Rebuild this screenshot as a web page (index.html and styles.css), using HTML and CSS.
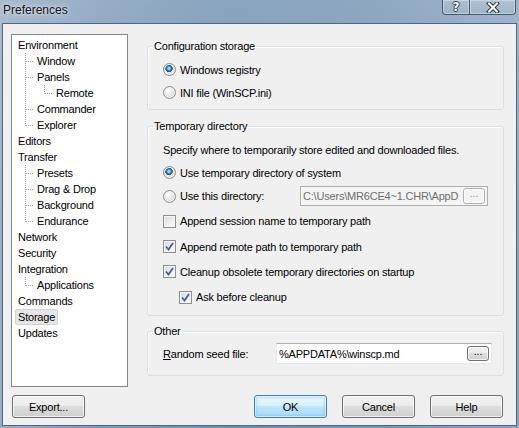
FILE: index.html
```html
<!DOCTYPE html>
<html>
<head>
    <meta charset="UTF-8">
    <title>Preferences</title>
    <link rel="stylesheet" href="styles.css">
</head>
<body>
    <div class="window">
        <div class="titlebar">
            <span class="title">Preferences</span>
            <div class="caption-buttons">
                <div class="caption help-caption"><span>?</span></div>
                <div class="caption close-caption">
                    <svg width="14" height="11" viewBox="0 0 14 11">
                        <path d="M3 1.5 L11 9.5 M11 1.5 L3 9.5" stroke="#2c3a4a" stroke-width="4" stroke-linecap="square"/>
                        <path d="M3 1.5 L11 9.5 M11 1.5 L3 9.5" stroke="#fff" stroke-width="2" stroke-linecap="square"/>
                    </svg>
                </div>
            </div>
        </div>

        <div class="client">
            <div class="main">
                <ul class="tree">
                    <li>
                        <div class="label"><span class="text">Environment</span></div>
                        <ul class="sub">
                            <li><div class="label"><span class="text">Window</span></div></li>
                            <li>
                                <div class="label"><span class="text">Panels</span></div>
                                <ul class="sub">
                                    <li class="last"><div class="label"><span class="text">Remote</span></div></li>
                                </ul>
                            </li>
                            <li><div class="label"><span class="text">Commander</span></div></li>
                            <li class="last"><div class="label"><span class="text">Explorer</span></div></li>
                        </ul>
                    </li>
                    <li><div class="label"><span class="text">Editors</span></div></li>
                    <li>
                        <div class="label"><span class="text">Transfer</span></div>
                        <ul class="sub">
                            <li><div class="label"><span class="text">Presets</span></div></li>
                            <li><div class="label"><span class="text">Drag &amp; Drop</span></div></li>
                            <li><div class="label"><span class="text">Background</span></div></li>
                            <li class="last"><div class="label"><span class="text">Endurance</span></div></li>
                        </ul>
                    </li>
                    <li><div class="label"><span class="text">Network</span></div></li>
                    <li><div class="label"><span class="text">Security</span></div></li>
                    <li>
                        <div class="label"><span class="text">Integration</span></div>
                        <ul class="sub">
                            <li class="last"><div class="label"><span class="text">Applications</span></div></li>
                        </ul>
                    </li>
                    <li><div class="label"><span class="text">Commands</span></div></li>
                    <li><div class="label"><span class="text selected">Storage</span></div></li>
                    <li><div class="label"><span class="text">Updates</span></div></li>
                </ul>

                <div class="pages">
                    <fieldset class="group config">
                        <legend>Configuration storage</legend>
                        <div class="group-body">
                            <div class="row h23"><span class="radio checked"></span>Windows registry</div>
                            <div class="row h23"><span class="radio"></span>INI file (WinSCP.ini)</div>
                        </div>
                    </fieldset>

                    <fieldset class="group temp">
                        <legend>Temporary directory</legend>
                        <div class="group-body">
                            <div class="row h23">Specify where to temporarily store edited and downloaded files.</div>
                            <div class="row h23"><span class="radio checked"></span>Use temporary directory of system</div>
                            <div class="row h24">
                                <span class="radio"></span>Use this directory:
                                <div class="edit disabled">
                                    <span class="edit-text">C:\Users\MR6CE4~1.CHR\AppD</span>
                                    <span class="mini-btn disabled">...</span>
                                </div>
                            </div>
                            <div class="row h26"><span class="check"></span>Append session name to temporary path</div>
                            <div class="row h25"><span class="check checked"><svg width="9" height="9" viewBox="0 0 9 9"><path d="M1 4.5 L3.5 7.5 L8 1" fill="none" stroke="#4a5f8f" stroke-width="1.8"/></svg></span>Append remote path to temporary path</div>
                            <div class="row h25"><span class="check checked"><svg width="9" height="9" viewBox="0 0 9 9"><path d="M1 4.5 L3.5 7.5 L8 1" fill="none" stroke="#4a5f8f" stroke-width="1.8"/></svg></span>Cleanup obsolete temporary directories on startup</div>
                            <div class="row h26 indent"><span class="check checked"><svg width="9" height="9" viewBox="0 0 9 9"><path d="M1 4.5 L3.5 7.5 L8 1" fill="none" stroke="#4a5f8f" stroke-width="1.8"/></svg></span>Ask before cleanup</div>
                        </div>
                    </fieldset>

                    <fieldset class="group other">
                        <legend>Other</legend>
                        <div class="group-body">
                            <div class="row h21">
                                <span><u>R</u>andom seed file:</span>
                                <div class="edit seed">
                                    <span class="edit-text">%APPDATA%\winscp.md</span>
                                    <span class="mini-btn">...</span>
                                </div>
                            </div>
                        </div>
                    </fieldset>
                </div>
            </div>

            <div class="footer">
                <button class="btn">Export...</button>
                <span class="spacer"></span>
                <button class="btn default">OK</button>
                <button class="btn">Cancel</button>
                <button class="btn">Help</button>
            </div>
        </div>
    </div>
</body>
</html>
```

FILE: styles.css
```css
body {
    margin: 0;
    width: 519px;
    height: 428px;
    overflow: hidden;
    font: 11px "Liberation Sans", Arial, sans-serif;
    letter-spacing: -0.2px;
    color: #000;
}

.window {
    height: 428px;
    display: flex;
    flex-direction: column;
    background:
        linear-gradient(to bottom, rgba(255, 255, 255, 0.18), rgba(255, 255, 255, 0) 60%),
        linear-gradient(to right, #98aec4 0%, #7e9bb8 20%, #7090b1 45%, #7594b4 70%, #8ba5bf 100%);
}

/* title bar */
.titlebar {
    height: 23px;
    display: flex;
    justify-content: space-between;
    align-items: flex-start;
    padding-left: 3px;
}

.title {
    font-size: 12px;
    letter-spacing: 0;
    line-height: 21px;
    color: #111;
    text-shadow: 0 0 6px rgba(235, 242, 250, 0.9), 0 0 3px rgba(235, 242, 250, 0.9);
}

.caption-buttons {
    display: flex;
    margin-right: 3px;
}

.caption {
    height: 14px;
    display: flex;
    align-items: center;
    justify-content: center;
    border: 1px solid rgba(40, 55, 72, 0.75);
    border-top: none;
    background: linear-gradient(to bottom, rgba(255, 255, 255, 0.2), rgba(255, 255, 255, 0.05));
    box-shadow: inset 0 0 0 1px rgba(255, 255, 255, 0.35);
}

.help-caption {
    width: 26px;
    border-bottom-left-radius: 4px;
    border-right: none;
}

.help-caption span {
    font: bold 12px "DejaVu Sans", sans-serif;
    color: #fff;
    text-shadow: 1px 0 0 #2c3a4a, -1px 0 0 #2c3a4a, 0 1px 0 #2c3a4a, 0 -1px 0 #2c3a4a;
    line-height: 13px;
}

.close-caption {
    width: 45px;
    border-bottom-right-radius: 4px;
}

/* dialog client area */
.client {
    flex: 1;
    margin: 0 2px 2px 2px;
    border: 1px solid #4d6782;
    background: #f0f0f0;
    display: flex;
    flex-direction: column;
}

.main {
    display: flex;
    padding: 10px 0 0 8px;
}

/* navigation tree */
.tree {
    list-style: none;
    margin: 0;
    padding: 2px 0 0 0;
    width: 117px;
    height: 353px;
    box-sizing: border-box;
    border: 1px solid #828790;
    background: #fff;
}

.tree ul {
    list-style: none;
    padding: 0;
}

.label {
    height: 16px;
    padding-left: 3px;
}

.text {
    display: inline-block;
    line-height: 14px;
    padding: 0 2px;
    border: 1px solid transparent;
    border-radius: 2px;
    white-space: nowrap;
}

.text.selected {
    background: #e6e6e6;
    border-color: #d3d3d3;
}

.tree > li > .sub {
    margin-left: 13px;
}

.sub .sub {
    margin-left: 19px;
}

.sub > li {
    background: repeating-linear-gradient(to bottom, #a0a0a0 0 1px, transparent 1px 2px) 0 0 / 1px 100% no-repeat;
}

.sub > li.last {
    background-size: 1px 9px;
}

.sub > li > .label {
    padding-left: 9px;
    background: repeating-linear-gradient(to right, #a0a0a0 0 1px, transparent 1px 2px) 1px 8px / 8px 1px no-repeat;
}

/* option pages */
.pages {
    width: 357px;
    margin-left: 19px;
    padding-top: 6px;
}

.group {
    margin: 0;
    padding: 0;
    border: 1px solid #d5dfe5;
    border-radius: 3px;
    box-shadow: inset 1px 1px 0 #fff;
}

.group legend {
    margin-left: 5px;
    padding: 0 1px;
    line-height: 13px;
}

.group-body {
    padding: 5px 15px 5px 15px;
}

.temp {
    margin-top: 10px;
}

.other {
    margin-top: 9px;
}

.other .group-body {
    padding: 5px 11px 11px 15px;
}

.row {
    display: flex;
    align-items: center;
    white-space: nowrap;
}

.h21 { height: 21px; }
.h23 { height: 23px; }
.h24 { height: 24px; }
.h25 { height: 25px; }
.h26 { height: 26px; }

.indent {
    padding-left: 16px;
}

.radio {
    width: 11px;
    height: 11px;
    margin-right: 4px;
    border-radius: 50%;
    border: 1px solid #8a8a8a;
    background: radial-gradient(circle at 40% 35%, #ffffff 0%, #e9e9e9 45%, #c9c9c9 100%);
    box-shadow: inset 0 0 0 1px #f4f4f4;
    flex: none;
}

.radio.checked {
    background:
        radial-gradient(circle at 45% 40%, #9fd9ff 0 1px, #3a8fcf 2px, #1f5a8e 3px, #30507a 3.5px, transparent 4px),
        radial-gradient(circle at 40% 35%, #ffffff 0%, #e9e9e9 45%, #c9c9c9 100%);
}

.check {
    width: 11px;
    height: 11px;
    margin-right: 4px;
    border: 1px solid #8e8f8f;
    background: linear-gradient(135deg, #d6d9de 0%, #f3f3f3 70%, #ffffff 100%);
    box-shadow: inset 0 0 0 1px #f6f6f6;
    display: flex;
    align-items: center;
    justify-content: center;
    flex: none;
}

.check svg {
    display: block;
}

/* edit boxes */
.edit {
    margin-left: auto;
    display: flex;
    align-items: center;
    box-sizing: border-box;
    border: 1px solid #abadb3;
    border-color: #abadb3 #e3e9ef #e3e9ef #e3e9ef;
    background: #fff;
    overflow: hidden;
}

.edit.disabled {
    width: 188px;
    height: 20px;
    border: 1px solid #afafaf;
    background: #f4f4f4;
    color: #6d6d6d;
}

.edit.seed {
    width: 216px;
    height: 21px;
}

.edit-text {
    flex: 1;
    overflow: hidden;
    white-space: nowrap;
    padding-left: 2px;
}

.mini-btn {
    width: 22px;
    height: 15px;
    margin-right: 2px;
    box-sizing: border-box;
    border: 1px solid #707070;
    border-radius: 3px;
    background: linear-gradient(to bottom, #f2f2f2 0%, #ebebeb 50%, #dddddd 50%, #cfcfcf 100%);
    box-shadow: inset 0 0 0 1px rgba(255, 255, 255, 0.7);
    text-align: center;
    line-height: 10px;
    font-size: 10px;
    letter-spacing: 0;
    flex: none;
}

.mini-btn.disabled {
    height: 16px;
    border-color: #adb2b5;
    background: #f4f4f4;
    color: #838383;
}

/* bottom buttons */
.footer {
    display: flex;
    gap: 15px;
    padding: 8px 13px 0 9px;
}

.spacer {
    flex: 1;
}

.btn {
    width: 73px;
    height: 23px;
    padding: 0;
    font: inherit;
    letter-spacing: inherit;
    color: #000;
    border: 1px solid #707070;
    border-radius: 3px;
    background: linear-gradient(to bottom, #f2f2f2 0%, #ebebeb 50%, #dddddd 50%, #cfcfcf 100%);
    box-shadow: inset 0 0 0 1px rgba(255, 255, 255, 0.7);
}

.btn.default {
    border-color: #3c7fb1;
    background: linear-gradient(to bottom, #eaf6fd 0%, #d9f0fc 50%, #bee6fd 50%, #a7d9f5 100%);
    box-shadow: inset 0 0 0 1px rgba(255, 255, 255, 0.6), inset 0 0 2px 2px rgba(72, 190, 255, 0.35);
}
```
